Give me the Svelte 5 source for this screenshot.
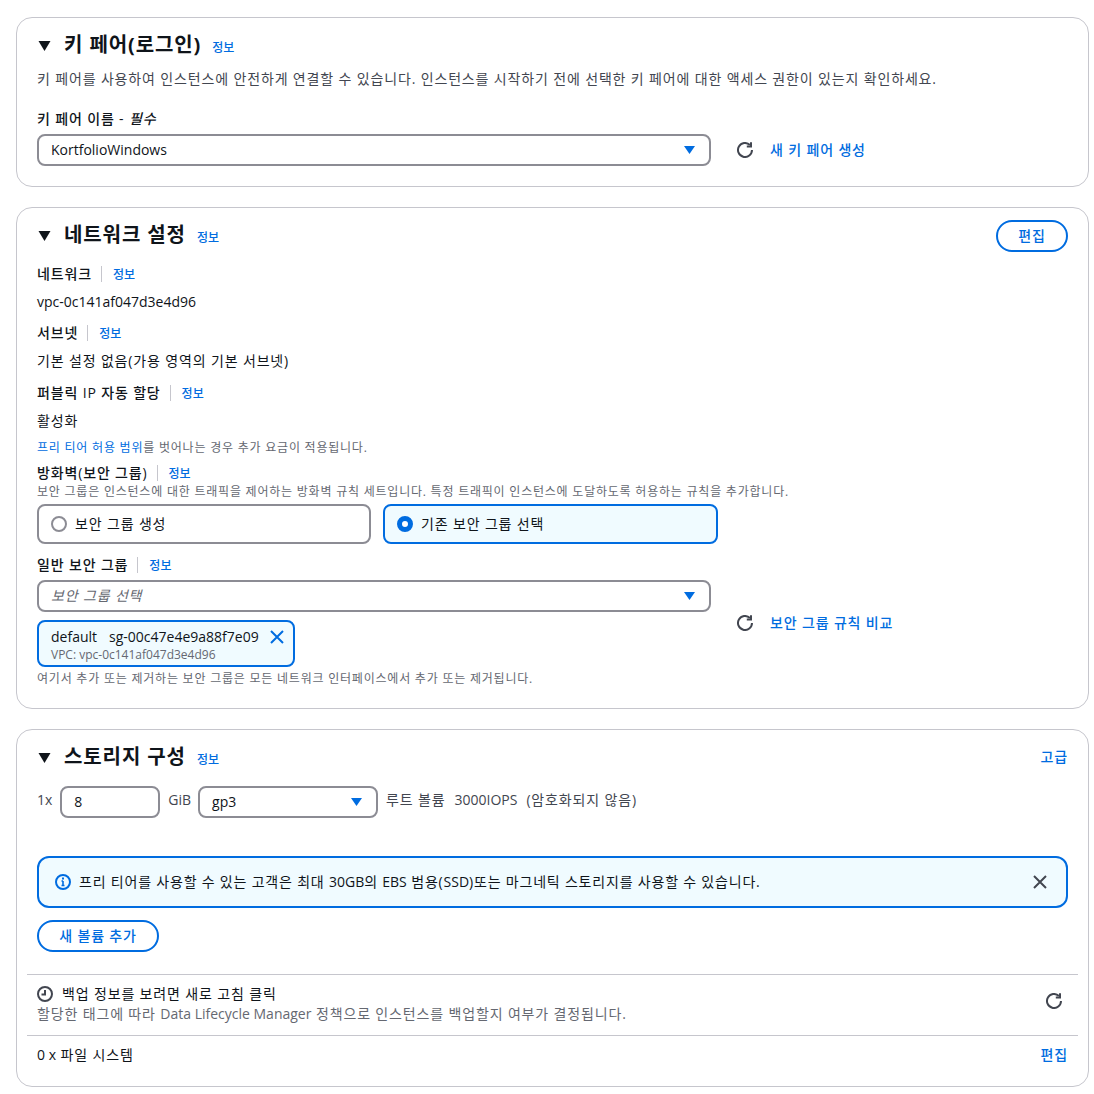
<script>
	const caret = 'M1 4h11L6.5 12z';
</script>

{#snippet refresh()}
	<svg class="icon" viewBox="0 0 16 16" width="16" height="16" fill="none" stroke="#424650" stroke-width="2">
		<path d="M15 8A7 7 0 1 1 12.9 3" />
		<path d="M14 .3v4.2H9.8" />
	</svg>
{/snippet}

{#snippet dropdown()}
	<svg class="caret" viewBox="0 0 16 16" width="16" height="16"><path d={caret} fill="#006ce0" /></svg>
{/snippet}

{#snippet heading(title, right = null, rightButton = false)}
	<div class="head">
		<svg class="tri" viewBox="0 0 14 14" width="14" height="14"><path d="M1.5 3h12L7.5 13z" fill="#0f141a" /></svg>
		<h2>{title}</h2>
		<a class="info">정보</a>
		{#if right}
			{#if rightButton}
				<button class="btn edit">{right}</button>
			{:else}
				<a class="right bold">{right}</a>
			{/if}
		{/if}
	</div>
{/snippet}

{#snippet field(label)}
	<div class="field-label"><b>{label}</b><span class="sep"></span><a class="info small">정보</a></div>
{/snippet}

<main>
	<section class="card one">
		{@render heading('키 페어(로그인)')}
		<p class="desc">키 페어를 사용하여 인스턴스에 안전하게 연결할 수 있습니다. 인스턴스를 시작하기 전에 선택한 키 페어에 대한 액세스 권한이 있는지 확인하세요.</p>
		<div class="req"><b>키 페어 이름 - <i>필수</i></b></div>
		<div class="select-row">
			<div class="select wide"><span class="en">KortfolioWindows</span>{@render dropdown()}</div>
			{@render refresh()}
			<a class="action">새 키 페어 생성</a>
		</div>
	</section>

	<section class="card two">
		{@render heading('네트워크 설정', '편집', true)}
		<div class="block first">{@render field('네트워크')}<div class="val en">vpc-0c141af047d3e4d96</div></div>
		<div class="block">{@render field('서브넷')}<div class="val">기본 설정 없음(가용 영역의 기본 서브넷)</div></div>
		<div class="block third">{@render field('퍼블릭 IP 자동 할당')}<div class="val">활성화</div></div>
		<p class="note free"><a>프리 티어 허용 범위</a>를 벗어나는 경우 추가 요금이 적용됩니다.</p>
		<div class="fw">{@render field('방화벽(보안 그룹)')}</div>
		<p class="note">보안 그룹은 인스턴스에 대한 트래픽을 제어하는 방화벽 규칙 세트입니다. 특정 트래픽이 인스턴스에 도달하도록 허용하는 규칙을 추가합니다.</p>
		<div class="radios">
			<div class="radio"><span class="dot"></span>보안 그룹 생성</div>
			<div class="radio on"><span class="dot"></span>기존 보안 그룹 선택</div>
		</div>
		<div class="sg-label">{@render field('일반 보안 그룹')}</div>
		<div class="sg-row">
			<div class="sg-left">
				<div class="select wide"><span class="ph">보안 그룹 선택</span>{@render dropdown()}</div>
				<div class="token">
					<div>
						<div class="token-main en"><span>default</span><span>sg-00c47e4e9a88f7e09</span></div>
						<div class="token-sub en">VPC: vpc-0c141af047d3e4d96</div>
					</div>
					<svg viewBox="0 0 16 16" width="16" height="16" fill="none" stroke="#006ce0" stroke-width="2"><path d="M2 2l12 12M14 2L2 14" /></svg>
				</div>
			</div>
			<div class="sg-action">
				{@render refresh()}
				<a class="action">보안 그룹 규칙 비교</a>
			</div>
		</div>
		<p class="note sgnote">여기서 추가 또는 제거하는 보안 그룹은 모든 네트워크 인터페이스에서 추가 또는 제거됩니다.</p>
	</section>

	<section class="card three">
		{@render heading('스토리지 구성', '고급')}
		<div class="volume">
			<span class="vol-text en">1x</span>
			<div class="select size en">8</div>
			<span class="vol-text en gib">GiB</span>
			<div class="select type"><span class="en">gp3</span>{@render dropdown()}</div>
			<span class="vol-text root">루트 볼륨&nbsp; <span class="en">3000IOPS</span> &nbsp;(암호화되지 않음)</span>
		</div>
		<div class="alert">
			<svg viewBox="0 0 16 16" width="16" height="16" fill="none" stroke="#006ce0" stroke-width="2"><circle cx="8" cy="8" r="7" /><path d="M8 11.5V7M6.5 7H8M6.5 11.5h3" stroke-width="1.6" /><path d="M8 3.6v1.8" /></svg>
			<span class="alert-text">프리 티어를 사용할 수 있는 고객은 최대 <span class="en">30GB</span>의 <span class="en">EBS</span> 범용(<span class="en">SSD</span>)또는 마그네틱 스토리지를 사용할 수 있습니다.</span>
			<svg viewBox="0 0 16 16" width="16" height="16" fill="none" stroke="#424650" stroke-width="2"><path d="M2 2l12 12M14 2L2 14" /></svg>
		</div>
		<button class="btn add">새 볼륨 추가</button>
		<div class="backup">
			<div>
				<div class="backup-title">
					<svg viewBox="0 0 16 16" width="16" height="16" fill="none" stroke="#424650" stroke-width="2"><circle cx="8" cy="8" r="7" /><path d="M8 4v4.5H4.5" /></svg>
					백업 정보를 보려면 새로 고침 클릭
				</div>
				<div class="backup-sub">할당한 태그에 따라 <span class="en">Data Lifecycle Manager</span> 정책으로 인스턴스를 백업할지 여부가 결정됩니다.</div>
			</div>
			<span class="backup-refresh">{@render refresh()}</span>
		</div>
		<div class="files">
			<span><span class="en">0 x</span> 파일 시스템</span>
			<a class="bold">편집</a>
		</div>
	</section>
</main>

<style>
	:global(body) {
		margin: 0;
		background: #fff;
		font-family: 'Open Sans', 'Noto Sans CJK KR', sans-serif;
		font-size: 14px;
		line-height: 20px;
		letter-spacing: 0.85px;
		color: #0f141a;
	}

	main {
		display: flex;
		flex-direction: column;
		gap: 20px;
		padding: 17px 5px 0 16px;
	}

	.en { letter-spacing: 0; }

	.card {
		box-sizing: border-box;
		border: 1px solid #c6c6cd;
		border-radius: 16px;
		padding: 16px 20px 20px;
		background: #fff;
	}

	.one { height: 170px; }
	.two { height: 502px; }
	.three { height: 358px; }

	a { color: #006ce0; }

	.head {
		display: flex;
		align-items: center;
		height: 22px;
	}

	.tri { margin-right: 13px; }

	h2 {
		margin: 0;
		font-size: 20px;
		font-weight: 700;
		line-height: 22px;
		letter-spacing: 0.9px;
	}

	.info {
		margin: 6px 0 0 11px;
		font-size: 12px;
		font-weight: 500;
		letter-spacing: 0;
	}

	.info.small { margin: 1px 0 0 11px; }

	.right { margin-left: auto; }
	.bold { font-weight: 500; }

	.desc {
		margin: 13px 0 0;
		color: #424650;
	}

	.req { margin-top: 20px; }
	.req b { font-weight: 500; }

	.select-row {
		display: flex;
		align-items: center;
		margin-top: 5px;
	}

	.select {
		display: flex;
		align-items: center;
		justify-content: space-between;
		box-sizing: border-box;
		height: 32px;
		border: 2px solid #8c8c94;
		border-radius: 8px;
		padding: 0 10px 0 12px;
		background: #fff;
	}

	.wide { width: 674px; }
	.ph { font-style: italic; color: #656871; }

	.caret, .icon { flex: none; }

	.select-row .icon { margin-left: 26px; }

	.action {
		margin: -1px 0 0 17px;
		font-weight: 500;
	}

	.first { margin-top: 18px; }
	.block + .block { margin-top: 11px; }
	.block.third { margin-top: 12px; }

	.field-label {
		display: flex;
		align-items: center;
		height: 20px;
	}

	.field-label b { font-weight: 500; }

	.sep {
		width: 1px;
		height: 16px;
		background: #c6c6cd;
		margin-left: 9px;
	}

	.val { margin-top: 8px; }

	.note {
		margin: 0;
		font-size: 12px;
		line-height: 16px;
		letter-spacing: 0.78px;
		color: #656871;
	}

	.free { margin-top: 9px; }

	.fw { margin-top: 7px; height: 21px; }

	.radios {
		display: flex;
		gap: 12px;
		margin-top: 4px;
	}

	.radio {
		display: flex;
		align-items: center;
		gap: 8px;
		box-sizing: border-box;
		width: 334px;
		height: 40px;
		border: 2px solid #8c8c94;
		border-radius: 8px;
		padding: 0 12px;
	}

	.dot {
		box-sizing: border-box;
		width: 16px;
		height: 16px;
		border: 2px solid #8c8c94;
		border-radius: 50%;
	}

	.radio.on {
		width: 335px;
		border-color: #006ce0;
		background: #f0fbff;
	}

	.radio.on .dot {
		border: 5px solid #006ce0;
		background: #fff;
	}

	.sg-label { margin-top: 11px; }

	.sg-row {
		display: flex;
		margin-top: 5px;
	}

	.sg-left { width: 674px; }

	.token {
		display: inline-flex;
		gap: 10px;
		box-sizing: border-box;
		width: 258px;
		height: 47px;
		margin-top: 8px;
		border: 2px solid #006ce0;
		border-radius: 8px;
		padding: 5px 8px 0 12px;
		background: #f0fbff;
	}

	.token svg { margin-top: 2px; flex: none; }

	.token-main { display: flex; gap: 12px; white-space: nowrap; }

	.token-sub {
		font-size: 12px;
		line-height: 16px;
		color: #656871;
	}

	.sg-action {
		display: flex;
		align-items: center;
		height: 20px;
		margin: 33px 0 0 26px;
	}

	.sgnote { margin-top: 4px; }

	.volume {
		display: flex;
		align-items: flex-start;
		margin-top: 18px;
	}

	.vol-text { color: #424650; margin-right: 8px; margin-top: 4px; }
	.gib { margin-right: 7px; }
	.size { width: 100px; margin-right: 8px; }
	.type { width: 180px; margin-right: 8px; }
	.root { margin: 4px 0 0; }

	.alert {
		display: flex;
		align-items: center;
		gap: 8px;
		box-sizing: border-box;
		height: 52px;
		margin-top: 38px;
		border: 2px solid #006ce0;
		border-radius: 12px;
		padding: 0 18px 0 16px;
		background: #f0fbff;
	}

	.alert-text { flex: 1; letter-spacing: 0.8px; }

	.btn {
		box-sizing: border-box;
		height: 32px;
		border: 2px solid #006ce0;
		border-radius: 20px;
		background: #fff;
		color: #006ce0;
		font: inherit;
		font-weight: 500;
		letter-spacing: inherit;
		padding: 0;
	}

	.edit { width: 72px; margin-left: auto; margin-top: 2px; }
	.add { width: 122px; display: block; margin-top: 12px; }

	.backup {
		display: flex;
		justify-content: space-between;
		margin: 22px -10px 0;
		padding: 9px 16px 11px 10px;
		border-top: 1px solid #c6c6cd;
		border-bottom: 1px solid #c6c6cd;
	}

	.backup-title {
		display: flex;
		align-items: center;
		gap: 9px;
	}

	.backup-sub { color: #656871; }

	.backup-refresh { margin-top: 9px; }

	.files {
		display: flex;
		justify-content: space-between;
		margin-top: 9px;
	}
</style>
